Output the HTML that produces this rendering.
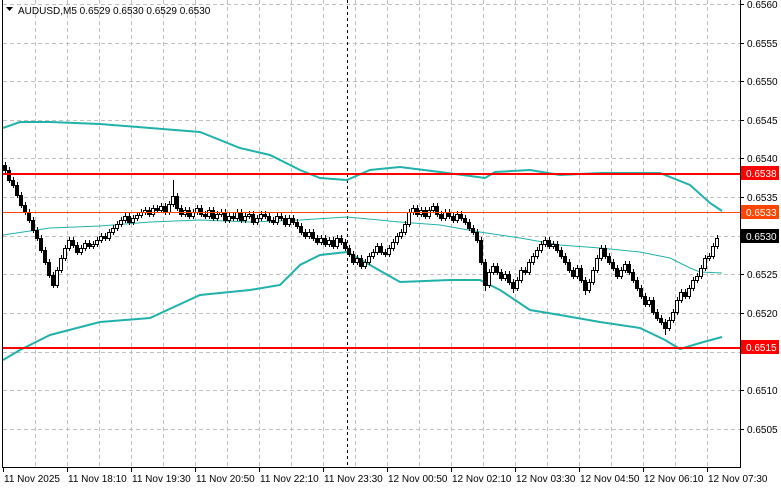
<!DOCTYPE html><html><head><style>
body{margin:0;background:#fff;width:781px;height:489px;overflow:hidden}
svg{position:absolute;left:0;top:0}
text{font-family:"Liberation Sans",sans-serif;font-size:10px;fill:#000}
</style></head><body>
<svg width="781" height="489" xmlns="http://www.w3.org/2000/svg">
<g stroke="#c0c0c0" stroke-dasharray="4,3">
<path d="M35.5,0V467M67.5,0V467M99.5,0V467M131.5,0V467M163.5,0V467M195.5,0V467M227.5,0V467M259.5,0V467M291.5,0V467M323.5,0V467M355.5,0V467M387.5,0V467M419.5,0V467M451.5,0V467M483.5,0V467M515.5,0V467M547.5,0V467M579.5,0V467M611.5,0V467M643.5,0V467M675.5,0V467M707.5,0V467"/>
<path d="M3,4.5H740M3,43.5H740M3,81.5H740M3,120.5H740M3,158.5H740M3,197.5H740M3,236.5H740M3,274.5H740M3,313.5H740M3,352.5H740M3,390.5H740M3,429.5H740"/>
</g>
<path d="M347.5,0V467" stroke="#000" stroke-dasharray="3,3"/>
<g fill="none" stroke="#20b2aa">
<polyline stroke-width="2" points="3,128 20,122 50,122 100,124 150,128 200,132 240,148 270,155 300,170 320,178 347,180 370,170 400,167 440,172 485,178 495,172 530,170 560,175 600,173 660,173 690,185 710,203 722,211"/>
<polyline stroke-width="1" points="3,235 50,228 100,226 150,222 200,220 250,222 300,220 347,217 400,222 440,225 480,232 520,238 560,245 600,248 640,252 670,258 690,268 700,272 722,273"/>
<polyline stroke-width="2" points="3,360 20,350 50,335 100,322 150,318 200,295 250,290 280,285 300,265 320,255 347,252 370,265 400,282 450,280 480,280 500,290 530,310 560,315 600,322 640,328 665,340 680,349 700,343 722,337"/>
</g>
<path stroke="#000" fill="none" d="M5.5,162V173M9.5,167V183M13.5,177V188M17.5,182V198M21.5,192V208M25.5,202V215M29.5,209V223M33.5,217V233M37.5,227V241M41.5,235V253M45.5,247V265M49.5,259V278M53.5,272V288M57.5,267V288M61.5,255V273M65.5,245V261M69.5,237V251M73.5,237V248M77.5,242V255M81.5,245V255M85.5,240V251M89.5,240V249M93.5,241V249M97.5,237V247M101.5,233V243M105.5,233V241M109.5,229V241M113.5,225V235M117.5,221V231M121.5,217V227M125.5,213V223M129.5,213V225M133.5,215V225M137.5,212V221M141.5,209V218M145.5,207V215M149.5,207V217M153.5,205V217M157.5,205V213M161.5,203V213M165.5,203V215M169.5,201V215M173.5,180V207M177.5,193V211M181.5,205V217M185.5,207V217M189.5,207V219M193.5,209V219M197.5,205V215M201.5,205V217M205.5,211V219M209.5,207V219M213.5,207V221M217.5,211V221M221.5,209V217M225.5,209V223M229.5,213V223M233.5,213V221M237.5,209V221M241.5,209V223M245.5,213V223M249.5,211V219M253.5,211V225M257.5,215V225M261.5,211V221M265.5,211V219M269.5,213V223M273.5,217V225M277.5,213V225M281.5,213V221M285.5,215V227M289.5,215V227M293.5,215V225M297.5,219V229M301.5,223V235M305.5,229V239M309.5,229V239M313.5,229V241M317.5,235V245M321.5,235V245M325.5,235V247M329.5,237V247M333.5,237V249M337.5,235V249M341.5,235V245M345.5,239V251M349.5,245V257M353.5,251V265M357.5,255V265M361.5,255V269M365.5,259V269M369.5,253V265M373.5,249V259M377.5,243V255M381.5,243V255M385.5,249V257M389.5,245V257M393.5,239V251M397.5,233V245M401.5,229V239M405.5,221V235M409.5,209V227M413.5,205V215M417.5,205V217M421.5,207V217M425.5,207V219M429.5,207V219M433.5,203V213M437.5,203V217M441.5,211V221M445.5,209V221M449.5,209V219M453.5,213V223M457.5,211V223M461.5,211V221M465.5,215V225M469.5,219V231M473.5,225V235M477.5,229V243M481.5,237V265M485.5,259V291M489.5,269V288M493.5,263V275M497.5,263V275M501.5,269V281M505.5,271V281M509.5,271V285M513.5,279V293M517.5,277V291M521.5,267V283M525.5,267V275M529.5,259V275M533.5,253V265M537.5,247V259M541.5,241V253M545.5,237V247M549.5,237V249M553.5,241V249M557.5,241V253M561.5,247V259M565.5,253V265M569.5,259V273M573.5,267V279M577.5,265V279M581.5,265V283M585.5,277V295M589.5,279V293M593.5,267V285M597.5,255V273M601.5,245V261M605.5,245V259M609.5,253V265M613.5,259V271M617.5,265V279M621.5,267V279M625.5,261V273M629.5,261V275M633.5,269V283M637.5,277V291M641.5,285V299M645.5,293V307M649.5,297V307M653.5,297V315M657.5,309V321M661.5,315V325M665.5,319V335M669.5,317V331M673.5,309V323M677.5,297V315M681.5,289V303M685.5,289V299M689.5,285V299M693.5,277V291M697.5,273V283M701.5,265V279M705.5,255V271M709.5,253V261M713.5,243V259M717.5,235V249"/>
<path stroke="#000" fill="#000" d="M3.5,165.5h3v5h-3zM7.5,170.5h3v10h-3zM11.5,180.5h3v5h-3zM15.5,185.5h3v10h-3zM19.5,195.5h3v10h-3zM23.5,205.5h3v7h-3zM27.5,212.5h3v8h-3zM31.5,220.5h3v10h-3zM35.5,230.5h3v8h-3zM39.5,238.5h3v12h-3zM43.5,250.5h3v12h-3zM47.5,262.5h3v13h-3zM51.5,275.5h3v10h-3zM71.5,240.5h3v5h-3zM75.5,245.5h3v7h-3zM87.5,243.5h3v3h-3zM103.5,236.5h3v2h-3zM127.5,216.5h3v6h-3zM147.5,210.5h3v4h-3zM155.5,208.5h3v2h-3zM163.5,206.5h3v6h-3zM175.5,196.5h3v12h-3zM179.5,208.5h3v6h-3zM187.5,210.5h3v6h-3zM199.5,208.5h3v6h-3zM203.5,214.5h3v2h-3zM211.5,210.5h3v8h-3zM223.5,212.5h3v8h-3zM231.5,216.5h3v2h-3zM239.5,212.5h3v8h-3zM251.5,214.5h3v8h-3zM263.5,214.5h3v2h-3zM267.5,216.5h3v4h-3zM271.5,220.5h3v2h-3zM279.5,216.5h3v2h-3zM283.5,218.5h3v6h-3zM291.5,218.5h3v4h-3zM295.5,222.5h3v4h-3zM299.5,226.5h3v6h-3zM303.5,232.5h3v4h-3zM311.5,232.5h3v6h-3zM315.5,238.5h3v4h-3zM323.5,238.5h3v6h-3zM331.5,240.5h3v6h-3zM339.5,238.5h3v4h-3zM343.5,242.5h3v6h-3zM347.5,248.5h3v6h-3zM351.5,254.5h3v8h-3zM359.5,258.5h3v8h-3zM379.5,246.5h3v6h-3zM383.5,252.5h3v2h-3zM415.5,208.5h3v6h-3zM423.5,210.5h3v6h-3zM435.5,206.5h3v8h-3zM439.5,214.5h3v4h-3zM447.5,212.5h3v4h-3zM451.5,216.5h3v4h-3zM459.5,214.5h3v4h-3zM463.5,218.5h3v4h-3zM467.5,222.5h3v6h-3zM471.5,228.5h3v4h-3zM475.5,232.5h3v8h-3zM479.5,240.5h3v22h-3zM483.5,262.5h3v23h-3zM495.5,266.5h3v6h-3zM499.5,272.5h3v6h-3zM507.5,274.5h3v8h-3zM511.5,282.5h3v6h-3zM523.5,270.5h3v2h-3zM547.5,240.5h3v6h-3zM555.5,244.5h3v6h-3zM559.5,250.5h3v6h-3zM563.5,256.5h3v6h-3zM567.5,262.5h3v8h-3zM571.5,270.5h3v6h-3zM579.5,268.5h3v12h-3zM583.5,280.5h3v10h-3zM603.5,248.5h3v8h-3zM607.5,256.5h3v6h-3zM611.5,262.5h3v6h-3zM615.5,268.5h3v8h-3zM627.5,264.5h3v8h-3zM631.5,272.5h3v8h-3zM635.5,280.5h3v8h-3zM639.5,288.5h3v8h-3zM643.5,296.5h3v8h-3zM651.5,300.5h3v12h-3zM655.5,312.5h3v6h-3zM659.5,318.5h3v4h-3zM663.5,322.5h3v6h-3zM683.5,292.5h3v4h-3z"/>
<path stroke="#000" fill="#fff" d="M55.5,270.5h3v15h-3zM59.5,258.5h3v12h-3zM63.5,248.5h3v10h-3zM67.5,240.5h3v8h-3zM79.5,248.5h3v4h-3zM83.5,243.5h3v5h-3zM91.5,244.5h3v2h-3zM95.5,240.5h3v4h-3zM99.5,236.5h3v4h-3zM107.5,232.5h3v6h-3zM111.5,228.5h3v4h-3zM115.5,224.5h3v4h-3zM119.5,220.5h3v4h-3zM123.5,216.5h3v4h-3zM131.5,218.5h3v4h-3zM135.5,215.5h3v3h-3zM139.5,212.5h3v3h-3zM143.5,210.5h3v2h-3zM151.5,208.5h3v6h-3zM159.5,206.5h3v4h-3zM167.5,204.5h3v8h-3zM171.5,196.5h3v8h-3zM183.5,210.5h3v4h-3zM191.5,212.5h3v4h-3zM195.5,208.5h3v4h-3zM207.5,210.5h3v6h-3zM215.5,214.5h3v4h-3zM219.5,212.5h3v2h-3zM227.5,216.5h3v4h-3zM235.5,212.5h3v6h-3zM243.5,216.5h3v4h-3zM247.5,214.5h3v2h-3zM255.5,218.5h3v4h-3zM259.5,214.5h3v4h-3zM275.5,216.5h3v6h-3zM287.5,218.5h3v6h-3zM307.5,232.5h3v4h-3zM319.5,238.5h3v4h-3zM327.5,240.5h3v4h-3zM335.5,238.5h3v8h-3zM355.5,258.5h3v4h-3zM363.5,262.5h3v4h-3zM367.5,256.5h3v6h-3zM371.5,252.5h3v4h-3zM375.5,246.5h3v6h-3zM387.5,248.5h3v6h-3zM391.5,242.5h3v6h-3zM395.5,236.5h3v6h-3zM399.5,232.5h3v4h-3zM403.5,224.5h3v8h-3zM407.5,212.5h3v12h-3zM411.5,208.5h3v4h-3zM419.5,210.5h3v4h-3zM427.5,210.5h3v6h-3zM431.5,206.5h3v4h-3zM443.5,212.5h3v6h-3zM455.5,214.5h3v6h-3zM487.5,272.5h3v13h-3zM491.5,266.5h3v6h-3zM503.5,274.5h3v4h-3zM515.5,280.5h3v8h-3zM519.5,270.5h3v10h-3zM527.5,262.5h3v10h-3zM531.5,256.5h3v6h-3zM535.5,250.5h3v6h-3zM539.5,244.5h3v6h-3zM543.5,240.5h3v4h-3zM551.5,244.5h3v2h-3zM575.5,268.5h3v8h-3zM587.5,282.5h3v8h-3zM591.5,270.5h3v12h-3zM595.5,258.5h3v12h-3zM599.5,248.5h3v10h-3zM619.5,270.5h3v6h-3zM623.5,264.5h3v6h-3zM647.5,300.5h3v4h-3zM667.5,320.5h3v8h-3zM671.5,312.5h3v8h-3zM675.5,300.5h3v12h-3zM679.5,292.5h3v8h-3zM687.5,288.5h3v8h-3zM691.5,280.5h3v8h-3zM695.5,276.5h3v4h-3zM699.5,268.5h3v8h-3zM703.5,258.5h3v10h-3zM707.5,256.5h3v2h-3zM711.5,246.5h3v10h-3zM715.5,238.5h3v8h-3z"/>
<path d="M3,174H740M3,348H740" stroke="#ff0000" stroke-width="2"/>
<path d="M3,212.5H740" stroke="#ff4500"/>
<path d="M2.5,0V468M740.5,0V468M2,467.5H741" stroke="#000"/>
<path stroke="#000" d="M740,4.5h4M740,43.5h4M740,81.5h4M740,120.5h4M740,158.5h4M740,197.5h4M740,236.5h4M740,274.5h4M740,313.5h4M740,352.5h4M740,390.5h4M740,429.5h4M3.5,467v5M67.5,467v5M131.5,467v5M195.5,467v5M259.5,467v5M323.5,467v5M387.5,467v5M451.5,467v5M515.5,467v5M579.5,467v5M643.5,467v5M707.5,467v5"/>
<text x="747" y="8">0.6560</text><text x="747" y="47">0.6555</text><text x="747" y="85">0.6550</text><text x="747" y="124">0.6545</text><text x="747" y="162">0.6540</text><text x="747" y="201">0.6535</text><text x="747" y="278">0.6525</text><text x="747" y="317">0.6520</text><text x="747" y="394">0.6510</text><text x="747" y="433">0.6505</text>
<rect x="741" y="166" width="38" height="14" fill="#ff0000"/><text x="746" y="177" style="fill:#fff">0.6538</text>
<rect x="741" y="205" width="38" height="14" fill="#ff4500"/><text x="746" y="216" style="fill:#fff">0.6533</text>
<rect x="741" y="229" width="38" height="14" fill="#000"/><text x="746" y="240" style="fill:#fff">0.6530</text>
<rect x="741" y="340" width="38" height="14" fill="#ff0000"/><text x="746" y="351" style="fill:#fff">0.6515</text>
<text x="4" y="482">11 Nov 2025</text><text x="68" y="482">11 Nov 18:10</text><text x="132" y="482">11 Nov 19:30</text><text x="196" y="482">11 Nov 20:50</text><text x="260" y="482">11 Nov 22:10</text><text x="324" y="482">11 Nov 23:30</text><text x="388" y="482">12 Nov 00:50</text><text x="452" y="482">12 Nov 02:10</text><text x="516" y="482">12 Nov 03:30</text><text x="580" y="482">12 Nov 04:50</text><text x="644" y="482">12 Nov 06:10</text><text x="708" y="482">12 Nov 07:30</text>
<path d="M6,7H13L9.5,11Z" fill="#000"/>
<text x="18" y="14">AUDUSD,M5  0.6529 0.6530 0.6529 0.6530</text>
</svg>
</body></html>
